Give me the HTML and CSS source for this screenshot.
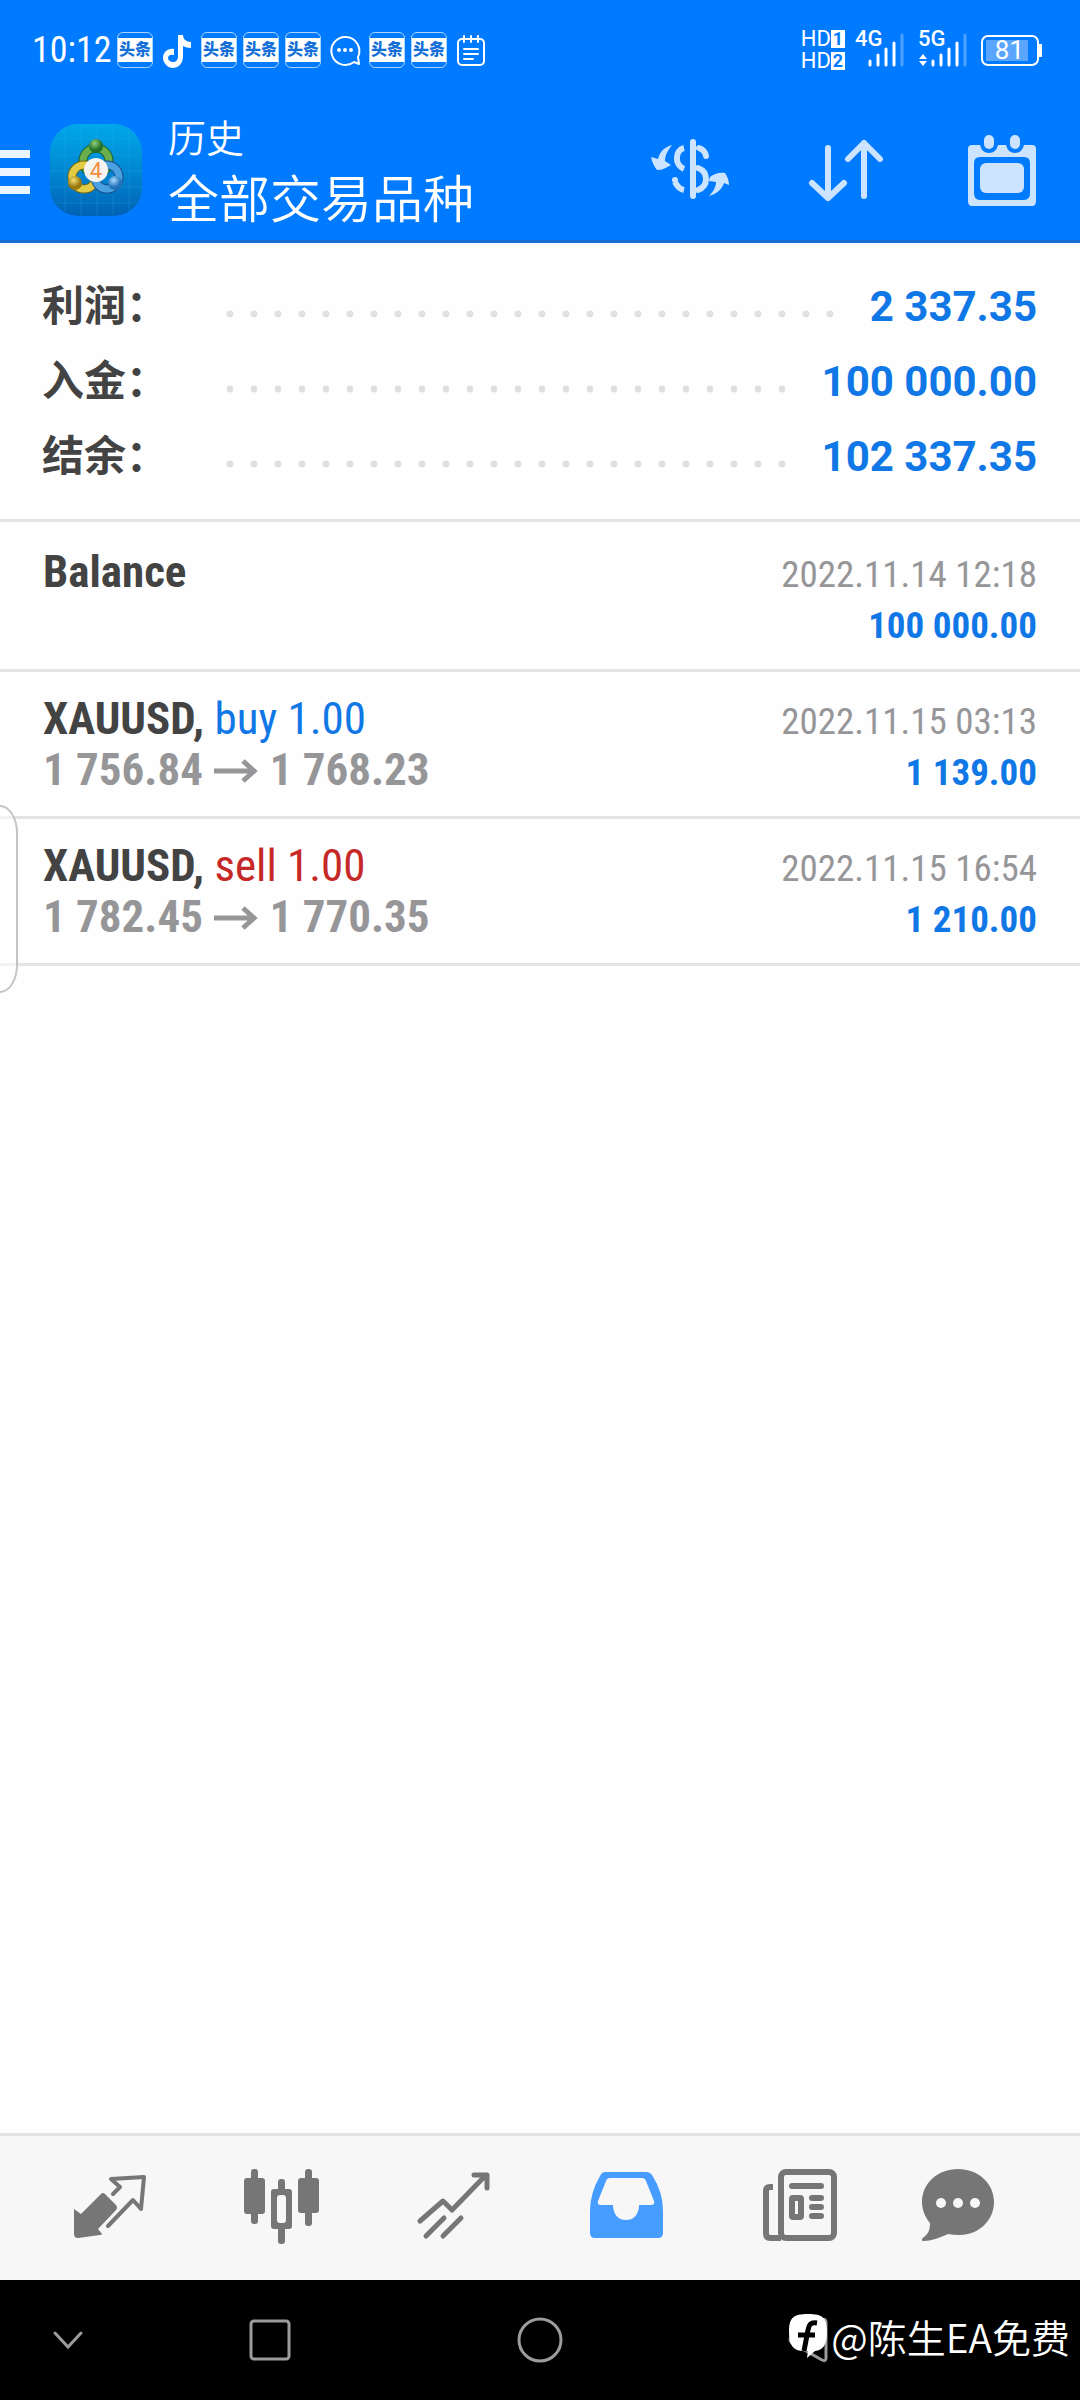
FILE: index.html
```
<!DOCTYPE html>
<html lang="zh-CN">
<head>
    <meta charset="UTF-8">
    <meta name="viewport" content="width=device-width, initial-scale=1">
    <title>历史</title>
    <link rel="stylesheet" href="styles.css">
</head>
<body>
    <header class="header">
        <div class="status-bar">
            <span class="clock">10:12</span>
            <div class="notifications">
                <span class="toutiao"><b>头条</b></span>
                <svg class="status-icon" viewBox="0 0 36 36"><path fill="#fff" d="M19 3h5c0 4 3 7 8 7v6c-3 0-6-1-8-2v10c0 8-5 12-10 12S4 31 4 26c0-6 5-10 11-9v6c-3-1-6 0-6 3 0 2 2 4 5 4s5-2 5-6z"/></svg>
                <span class="toutiao"><b>头条</b></span>
                <span class="toutiao"><b>头条</b></span>
                <span class="toutiao"><b>头条</b></span>
                <svg class="status-icon" viewBox="0 0 36 36"><path fill="none" stroke="#fff" stroke-width="2" stroke-linejoin="round" d="M27 30a14 14 0 1 1 4-5l1 7z"/><g fill="#fff"><circle cx="12" cy="18" r="2"/><circle cx="18" cy="18" r="2"/><circle cx="24" cy="18" r="2"/></g></svg>
                <span class="toutiao"><b>头条</b></span>
                <span class="toutiao"><b>头条</b></span>
                <svg class="status-icon" viewBox="0 0 36 36"><g fill="none" stroke="#fff" stroke-width="2" stroke-linecap="round"><rect x="5" y="7" width="26" height="26" rx="4"/><path d="M11 4v6M18 4v6M25 4v6M11 17h14M11 22h14M11 27h9"/></g></svg>
            </div>
            <div class="signals">
                <div class="hd">
                    <span>HD<b>1</b></span>
                    <span>HD<b>2</b></span>
                </div>
                <div class="signal">
                    <span class="network">4G</span>
                    <svg class="bars" viewBox="0 0 50 36"><g stroke="#fff" stroke-width="3" stroke-linecap="round"><path d="M15 29v4M23 23v10M31 17v16M39 11v22"/><path d="M47 3v30" opacity=".3"/></g></svg>
                </div>
                <div class="signal">
                    <span class="network">5G</span>
                    <svg class="bars" viewBox="0 0 50 36"><g stroke="#fff" stroke-width="3" stroke-linecap="round"><path d="M15 29v4M23 23v10M31 17v16M39 11v22"/><path d="M47 3v30" opacity=".3"/></g><path fill="#fff" d="M1 27l4-5 4 5zM1 29h8l-4 5z"/></svg>
                </div>
                <div class="battery"><span>81</span></div>
            </div>
        </div>

        <div class="toolbar">
            <button class="menu-button" aria-label="菜单">
                <svg width="30" height="48" viewBox="0 0 30 48"><path fill="#eaf5ff" d="M0 4h30v8H0zM0 22h30v8H0zM0 40h30v8H0z"/></svg>
            </button>
            <svg class="app-logo" viewBox="0 0 92 92">
                <defs>
                    <linearGradient id="logoBg" x1="0" y1="0" x2="0" y2="1"><stop offset="0" stop-color="#00a8ea"/><stop offset=".5" stop-color="#0088d2"/><stop offset="1" stop-color="#0062b4"/></linearGradient>
                    <radialGradient id="green" cx=".4" cy=".3"><stop offset="0" stop-color="#8fd07a"/><stop offset="1" stop-color="#246f28"/></radialGradient>
                    <radialGradient id="gold" cx=".4" cy=".3"><stop offset="0" stop-color="#f4e070"/><stop offset="1" stop-color="#98780e"/></radialGradient>
                    <radialGradient id="azure" cx=".4" cy=".3"><stop offset="0" stop-color="#a6dcff"/><stop offset="1" stop-color="#2272b8"/></radialGradient>
                </defs>
                <rect width="92" height="92" rx="28" fill="url(#logoBg)"/>
                <path stroke="#35b4ec" stroke-opacity=".25" d="M15 4v84M31 0v92M47 0v92M63 0v92M79 4v84M4 15h84M0 31h92M0 47h92M0 63h92M4 79h84"/>
                <circle cx="46" cy="37" r="13" fill="none" stroke="#1d5a25" stroke-width="9"/>
                <circle cx="46" cy="37" r="13" fill="none" stroke="#68ae4c" stroke-width="7"/>
                <circle cx="34" cy="53" r="12" fill="none" stroke="#7d6a10" stroke-width="9"/>
                <circle cx="34" cy="53" r="12" fill="none" stroke="#e2cb45" stroke-width="7"/>
                <circle cx="57" cy="53" r="12" fill="none" stroke="#15508c" stroke-width="9"/>
                <circle cx="57" cy="53" r="12" fill="none" stroke="#4ba0df" stroke-width="7"/>
                <circle cx="46" cy="22" r="7" fill="url(#green)"/>
                <circle cx="25" cy="59" r="7" fill="url(#gold)"/>
                <circle cx="65" cy="59" r="7" fill="url(#azure)"/>
                <circle cx="46" cy="46" r="12" fill="#f6f4f0"/>
                <text class="logo-number" x="46" y="54" text-anchor="middle">4</text>
            </svg>
            <div class="titles">
                <p>历史</p>
                <h1>全部交易品种</h1>
            </div>
            <div class="actions">
                <button aria-label="交易品种">
                    <svg width="80" height="80" viewBox="0 0 80 80"><g fill="none" stroke="#cce4ff" stroke-linecap="round" stroke-width="6"><path d="M43 12v54"/><path stroke-linecap="butt" d="M34 18c-9 2-10 17 0 21M34 60c-5-1-7-4-9-8"/><path d="M49 18q6 2 7 8M48 38q8 3 8 11t-8 11M25 50v0"/></g><path fill="#cce4ff" d="M22 15c-7 2-12 6-14 14l-7-2c1 5 3 9 6 13 5 0 9-2 14-5l-6-4c0-6 3-11 7-16zM59 66c8-2 13-7 15-13l5 2c0-5-2-9-4-12-6-1-11 1-15 4l-1 4 7 1c0 5-3 10-7 14z"/></svg>
                </button>
                <button aria-label="排序">
                    <svg width="80" height="80" viewBox="0 0 80 80"><path fill="none" stroke="#cce4ff" stroke-width="6" stroke-linecap="round" stroke-linejoin="round" d="M22 18v50M6 53l16 15 16-15M58 66V13M42 29l16-16 16 16"/></svg>
                </button>
                <button aria-label="日期">
                    <svg width="80" height="80" viewBox="0 3 80 80"><path fill="#cce4ff" fill-rule="evenodd" d="M10 18h8q2 8 9 8t9-8h8q2 8 9 8t9-8h8q4 0 4 4v52q0 5-4 5H10q-4 0-4-5V22q0-4 4-4zM18 30q-6 0-6 6v30q0 7 6 7h44q6 0 6-7V36q0-6-6-6z"/><g fill="#cce4ff"><rect x="22" y="8" width="10" height="14" rx="5"/><rect x="48" y="8" width="10" height="14" rx="5"/><rect x="18" y="36" width="44" height="30" rx="6"/></g></svg>
                </button>
            </div>
        </div>
    </header>

    <main class="content">
        <dl class="summary">
            <div class="summary-row"><dt>利润：</dt><dd>2 337.35</dd></div>
            <div class="summary-row"><dt>入金：</dt><dd>100 000.00</dd></div>
            <div class="summary-row"><dt>结余：</dt><dd>102 337.35</dd></div>
        </dl>

        <ul class="deals">
            <li class="deal deal-first">
                <div class="deal-line">
                    <strong class="symbol">Balance</strong>
                    <time class="date">2022.11.14 12:18</time>
                </div>
                <div class="deal-line">
                    <span class="prices">&nbsp;</span>
                    <span class="amount">100 000.00</span>
                </div>
            </li>
            <li class="deal">
                <div class="deal-line">
                    <span class="symbol"><strong>XAUUSD,</strong> <span class="buy">buy 1.00</span></span>
                    <time class="date">2022.11.15 03:13</time>
                </div>
                <div class="deal-line">
                    <span class="prices">1 756.84 <svg class="arrow" viewBox="0 0 44 26"><path fill="none" stroke="#969699" stroke-width="5" d="M0 12h41M29 2l11 10-11 10"/></svg> 1 768.23</span>
                    <span class="amount">1 139.00</span>
                </div>
            </li>
            <li class="deal">
                <div class="deal-line">
                    <span class="symbol"><strong>XAUUSD,</strong> <span class="sell">sell 1.00</span></span>
                    <time class="date">2022.11.15 16:54</time>
                </div>
                <div class="deal-line">
                    <span class="prices">1 782.45 <svg class="arrow" viewBox="0 0 44 26"><path fill="none" stroke="#969699" stroke-width="5" d="M0 12h41M29 2l11 10-11 10"/></svg> 1 770.35</span>
                    <span class="amount">1 210.00</span>
                </div>
            </li>
        </ul>
        <div class="edge-handle"></div>
    </main>

    <nav class="tabs">
        <button aria-label="行情">
            <svg viewBox="0 -7 96 96"><path fill="#767676" d="M12 42l7 5 20-20q2-2 4 0l11 11q2 3 0 5L36 62l4 5q0 1-2 1l-22 3q-4 0-4-4z"/><path fill="none" stroke="#767676" stroke-width="4" stroke-linejoin="round" stroke-linecap="round" d="M51 27l7-7-9-8 33-2-3 32-8-9-25 26"/></svg>
        </button>
        <button aria-label="图表">
            <svg viewBox="0 0 96 96"><g fill="#767676"><rect x="10" y="18" width="21" height="36" rx="3"/><rect x="17" y="9" width="7" height="55" rx="3"/><rect x="64" y="18" width="21" height="35" rx="3"/><rect x="71" y="9" width="7" height="57" rx="3"/><rect x="37" y="29" width="21" height="40" rx="3"/><rect x="44" y="19" width="7" height="65" rx="3"/></g><rect x="43" y="35" width="9" height="28" rx="3" fill="#f7f7f7"/></svg>
        </button>
        <button aria-label="交易">
            <svg viewBox="0 0 96 96"><path fill="none" stroke="#767676" stroke-width="5" stroke-linecap="round" stroke-linejoin="round" d="M14 61l23-20 9 9 34-35M68 15h13v13M20 76l18-18M37 76l18-18"/></svg>
        </button>
        <button aria-label="历史">
            <svg viewBox="0 0 96 96"><path fill="#469dff" fill-rule="evenodd" d="M27 12h41q4 0 6 3 11 17 11 36v22q0 5-5 5H17q-5 0-5-5V51q0-18 10-35 2-4 5-4zM32 18q-3 0-4 3l-8 20q-1 4 3 4h12v2q2 13 13 13t13-13v-2h12q4 0 3-4l-8-20q-1-3-4-3z"/></svg>
        </button>
        <button aria-label="新闻">
            <svg viewBox="0 0 96 96"><path fill="none" stroke="#767676" stroke-width="6" d="M23 27h-3q-4 0-4 4v42q0 5 4 5h11"/><rect x="31" y="12" width="53" height="66" rx="5" fill="none" stroke="#767676" stroke-width="6"/><rect x="42" y="38" width="9" height="19" rx="1" fill="none" stroke="#767676" stroke-width="6"/><path stroke="#767676" stroke-width="6" stroke-linecap="round" d="M42 26h29M62 38h9M62 47h9M62 56h9"/></svg>
        </button>
        <button aria-label="消息">
            <svg viewBox="0 0 96 96"><path fill="#767676" d="M36 9c20 0 36 14 36 33S56 75 38 75q-7 0-12-1c-9 4-17 7-24 7-3 0-3-2 0-4 5-4 6-8 6-14C3 57 0 50 0 42 0 23 16 9 36 9z"/><g fill="#f7f7f7"><circle cx="19" cy="43" r="5"/><circle cx="36" cy="43" r="5"/><circle cx="53" cy="43" r="5"/></g></svg>
        </button>
    </nav>

    <footer class="system-nav">
        <button aria-label="收起"><svg viewBox="0 0 48 48"><path d="M11 17l13 14 13-14"/></svg></button>
        <button aria-label="最近任务"><svg viewBox="0 0 48 48"><rect x="5" y="5" width="38" height="38" rx="3"/></svg></button>
        <button aria-label="主屏幕"><svg viewBox="0 0 48 48"><circle cx="24" cy="24" r="21"/></svg></button>
        <button aria-label="返回"><svg viewBox="0 0 48 48"><path d="M40 6v36q0 4-4 2L6 27q-4-3 0-6L36 4q4-2 4 2z"/></svg></button>
        <div class="watermark">
            <svg width="38" height="44" viewBox="0 0 38 44"><path fill="#fff" d="M19 0c15 0 19 4 19 18 0 13-4 18-12 19l-8 7 1-7h-6C4 36 0 31 0 18 0 4 4 0 19 0z"/><path fill="none" stroke="#000" stroke-width="5" d="M28 9c-7-1-8 2-9 7l-4 21M9 21h17"/></svg>
            <span>@陈生EA免费</span>
        </div>
    </footer>
</body>
</html>
```
FILE: styles.css
```
* {
    box-sizing: border-box;
}

body {
    display: flex;
    flex-direction: column;
    min-height: 100vh;
    margin: 0;
    background-color: #fefefe;
    font-family: Roboto, "Noto Sans CJK SC", sans-serif;
    color: #434343;
}

h1, p, dl, dd, ul {
    margin: 0;
    padding: 0;
}

svg {
    display: block;
    flex: none;
}

button {
    display: flex;
    align-items: center;
    justify-content: center;
    padding: 0;
    border: none;
    background: none;
    cursor: pointer;
}

/* Header */
.header {
    background-color: #007aff;
    border-bottom: 3px solid #1a6fd0;
    color: #fff;
}

.status-bar {
    display: flex;
    align-items: center;
    height: 100px;
    padding: 0 41px 0 32px;
}

.clock {
    width: 85px;
    font-family: "Roboto Condensed", "Liberation Sans Narrow", Roboto, sans-serif;
    font-size: 36px;
    line-height: 48px;
}

.notifications {
    display: flex;
    gap: 6px;
}

.status-icon {
    width: 36px;
    height: 36px;
}

.toutiao {
    display: flex;
    align-items: center;
    width: 36px;
    height: 36px;
    border: 1px solid #a8d2ff;
    border-radius: 6px;
}

.toutiao b {
    flex: 1;
    background-color: #fff;
    color: #1470d8;
    font-size: 16px;
    font-weight: 900;
    line-height: 24px;
    text-align: center;
}

.signals {
    display: flex;
    align-items: center;
    margin-left: auto;
}

.hd {
    display: grid;
    gap: 4px;
    margin-right: 10px;
    font-size: 22px;
    line-height: 18px;
}

.hd span {
    display: flex;
}

.hd b {
    width: 14px;
    background-color: #fff;
    color: #007aff;
    font-size: 18px;
    text-align: center;
}

.signal {
    position: relative;
    margin-right: 13px;
}

.network {
    position: absolute;
    top: -4px;
    left: 0;
    font-size: 22px;
    font-weight: 500;
    line-height: 22px;
}

.bars {
    width: 50px;
    height: 36px;
}

.battery {
    position: relative;
    width: 58px;
    height: 31px;
    padding: 3px;
    border: 2px solid #fff;
    border-radius: 7px;
}

.battery span {
    display: block;
    width: 42px;
    background-color: #5aa6ff;
    font-size: 26px;
    line-height: 21px;
    text-align: right;
    padding-right: 4px;
}

.battery::after {
    content: "";
    position: absolute;
    top: 7px;
    right: -5px;
    width: 3px;
    height: 13px;
    background-color: #fff;
}

.toolbar {
    display: flex;
    align-items: center;
    height: 140px;
    padding: 0 38px 0 0;
}

.app-logo {
    width: 92px;
    height: 92px;
    margin: 0 26px 0 20px;
}

.logo-number {
    fill: #f09040;
    font-size: 22px;
}

.titles {
    padding-bottom: 4px;
    font-family: "Noto Sans CJK SC", sans-serif;
    font-weight: 350;
}

.titles p {
    font-size: 38px;
    line-height: 56px;
}

.titles h1 {
    font-size: 51px;
    font-weight: 350;
    line-height: 64px;
}

.actions {
    display: flex;
    gap: 76px;
    margin-left: auto;
}

/* Account summary */
.content {
    position: relative;
    flex: 1;
}

.summary {
    padding: 26px 43px 25px 42px;
    border-bottom: 3px solid #e4e4e4;
}

.summary-row {
    display: flex;
    align-items: center;
    height: 75px;
    font-size: 42px;
    font-weight: 700;
    line-height: 75px;
}

.summary-row dt {
    width: 176px;
}

/* Dotted leader between label and value */
.summary-row::before {
    content: "";
    order: 1;
    flex: 1;
    height: 24px;
    margin: 14px 30px 0 0;
    background: radial-gradient(circle, #e0e0e1 3px, transparent 4px) 0 0 / 24px 24px repeat-x;
}

.summary-row dd {
    order: 2;
    color: #1077e6;
}

/* Deals */
.deals {
    list-style: none;
    font-family: "Roboto Condensed", "Liberation Sans Narrow", Roboto, sans-serif;
}

.deal {
    padding: 21px 43px;
    border-bottom: 3px solid #e4e4e4;
}

.deal-first {
    padding-top: 24px;
}

.deal-line {
    display: flex;
    align-items: baseline;
    justify-content: space-between;
    height: 51px;
    line-height: 51px;
}

.symbol,
.prices {
    font-size: 45px;
}

.prices {
    color: #969699;
    font-weight: 700;
}

.arrow {
    display: inline-block;
    width: 44px;
    height: 26px;
    margin: 0 1px;
}

.date,
.amount {
    font-size: 37px;
}

.date {
    color: #969699;
}

.amount {
    color: #1077e6;
    font-weight: 700;
}

.buy {
    color: #1077e6;
}

.sell {
    color: #c62828;
}

/* Pull-out handle on the left edge */
.edge-handle {
    position: absolute;
    top: 562px;
    left: 0;
    width: 18px;
    height: 188px;
    border: 2px solid #c4c4c4;
    border-left: none;
    border-radius: 0 18px 18px 0 / 0 28px 28px 0;
    background-color: rgba(255, 255, 255, 0.5);
}

/* Bottom tabs */
.tabs {
    display: grid;
    grid-template-columns: repeat(6, 1fr);
    padding: 24px;
    border-top: 3px solid #e3e3e3;
    background-color: #f7f7f7;
}

.tabs svg {
    width: 96px;
    height: 96px;
}

/* System navigation */
.system-nav {
    position: relative;
    display: grid;
    grid-template-columns: 1fr 2fr 2fr 2fr 1fr;
    height: 120px;
    background-color: #000;
}

.system-nav button svg {
    width: 48px;
    height: 48px;
    fill: none;
    stroke: #9c9c9c;
    stroke-width: 3;
    stroke-linecap: round;
}

.watermark {
    position: absolute;
    top: 32px;
    right: 10px;
    display: flex;
    align-items: center;
    gap: 4px;
    color: #fff;
    font-family: "Noto Sans CJK SC", sans-serif;
    font-size: 39px;
    font-weight: 350;
    line-height: 48px;
}
```
